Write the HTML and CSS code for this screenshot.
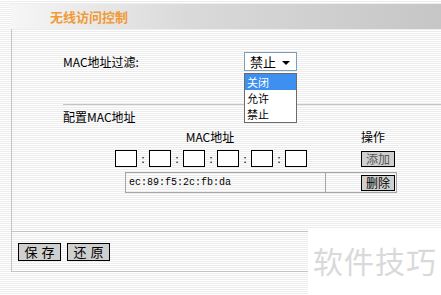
FILE: index.html
```html
<!DOCTYPE html>
<html lang="zh-CN">
<head>
  <meta charset="UTF-8">
  <title>无线访问控制</title>
  <link rel="stylesheet" href="styles.css">
</head>
<body>
  <div class="header">
    <h3>无线访问控制</h3>
  </div>

  <div class="panel">
    <div class="filter-row">
      <span class="filter-label">MAC地址过滤:</span>
      <div class="select-wrap">
        <div class="select-box">
          <span>禁止</span>
          <span class="arrow"></span>
        </div>
        <ul class="select-list">
          <li class="active">关闭</li>
          <li>允许</li>
          <li>禁止</li>
        </ul>
      </div>
    </div>

    <div class="config">
      <div class="config-title">配置MAC地址</div>

      <div class="mac-table">
        <div class="table-head">
          <span class="col-mac">MAC地址</span>
          <span class="col-op">操作</span>
        </div>

        <div class="input-row">
          <div class="mac-inputs">
            <span class="box"></span><span class="sep">:</span>
            <span class="box"></span><span class="sep">:</span>
            <span class="box"></span><span class="sep">:</span>
            <span class="box"></span><span class="sep">:</span>
            <span class="box"></span><span class="sep">:</span>
            <span class="box"></span>
          </div>
          <div class="col-op"><button class="btn small grey-text">添加</button></div>
        </div>

        <div class="entry-row">
          <div class="entry-mac">ec:89:f5:2c:fb:da</div>
          <div class="entry-op"><button class="btn small">删除</button></div>
        </div>
      </div>
    </div>

    <div class="footer">
      <button class="btn wide">保存</button>
      <button class="btn wide">还原</button>
    </div>
  </div>

  <div class="watermark">软件技巧</div>
</body>
</html>
```

FILE: styles.css
```css
body {
  margin: 0;
  padding: 0;
  font-family: "Noto Sans CJK SC", "Liberation Sans", sans-serif;
  font-size: 12px;
  color: #000;
  background: repeating-linear-gradient(to bottom, #ffffff 0, #ffffff 1px, #ececec 1px, #ececec 2px);
  height: 295px;
  overflow: hidden;
  position: relative;
}

.header {
  margin: 4px 0 0 10px;
  height: 25px;
  background: linear-gradient(to right, #f6f6f6, #dadada 40%, #c6c6c6);
}

.header h3 {
  margin: 0;
  padding-left: 40px;
  line-height: 25px;
  font-size: 13px;
  font-weight: bold;
  color: #f19a36;
}

.panel {
  margin-left: 11px;
  border-left: 1px solid #c4c4c4;
  border-bottom: 1px solid #c4c4c4;
}

.filter-row {
  display: flex;
  align-items: center;
  height: 21px;
  padding: 22px 0 0 51px;
  margin-bottom: 32px;
}

.filter-label {
  width: 181px;
  line-height: 16px;
}

.select-wrap {
  position: relative;
}

.select-box {
  width: 53px;
  height: 19px;
  border: 1px solid #7f9db9;
  background: #fff;
  display: flex;
  align-items: center;
  justify-content: space-between;
  padding-left: 5px;
  padding-right: 6px;
  box-sizing: border-box;
  font-size: 13px;
}

.arrow {
  width: 0;
  height: 0;
  border-left: 4px solid transparent;
  border-right: 4px solid transparent;
  border-top: 4px solid #000;
  margin-top: 2px;
}

.select-list {
  position: absolute;
  top: 21px;
  left: 0;
  width: 53px;
  box-sizing: border-box;
  margin: 0;
  padding: 0;
  list-style: none;
  background: #fff;
  border: 1px solid #6b6b6b;
  font-size: 11px;
}

.select-list li {
  height: 16px;
  line-height: 16px;
  padding-left: 2px;
  overflow: hidden;
}

.select-list li.active {
  background: #3d8ff0;
  color: #fff;
}

.config {
  margin-left: 51px;
  border-top: 1px solid #c4c4c4;
}

.config-title {
  padding-top: 4px;
  line-height: 16px;
}

.mac-table {
  margin-left: 52px;
  width: 282px;
}

.table-head {
  display: flex;
  margin-top: 5px;
  line-height: 14px;
}

.col-mac {
  width: 190px;
  text-align: center;
}

.col-op {
  margin-left: auto;
  width: 36px;
}

.input-row {
  display: flex;
  margin-top: 6px;
  height: 17px;
}

.mac-inputs {
  display: flex;
}

.box {
  width: 20px;
  height: 15px;
  border: 1px solid #000;
  background: #fff;
}

.sep {
  width: 12px;
  text-align: center;
  line-height: 17px;
  font-size: 11px;
}

.entry-row {
  display: flex;
  margin: 5px 0 0 10px;
  height: 19px;
  border: 1px solid #a6a6a6;
}

.entry-mac {
  width: 200px;
  border-right: 1px solid #a6a6a6;
  padding-left: 3px;
  font-family: "Liberation Mono", monospace;
  font-size: 10px;
  line-height: 19px;
  box-sizing: border-box;
}

.entry-op {
  flex: 1;
  display: flex;
  align-items: center;
  justify-content: flex-end;
  padding-right: 1px;
}

.btn {
  font-family: "Noto Sans CJK SC", sans-serif;
  background: #cfcfcf;
  border: 1px solid #000;
  padding: 0;
  margin: 0;
  color: #000;
  white-space: nowrap;
}

.btn.small {
  width: 34px;
  height: 16px;
  font-size: 12px;
  line-height: 14px;
}

.grey-text {
  color: #555;
}

.footer {
  margin-top: 38px;
  border-top: 1px solid #c4c4c4;
  padding: 11px 0 10px 6px;
  display: flex;
  gap: 6px;
}

.btn.wide {
  width: 43px;
  height: 18px;
  font-size: 13px;
  line-height: 16px;
  letter-spacing: 4px;
  text-indent: 4px;
}

.watermark {
  position: absolute;
  left: 308px;
  top: 229px;
  width: 133px;
  height: 66px;
  background: #fff;
  color: #d9d9d9;
  font-size: 30px;
  line-height: 30px;
  padding: 16px 0 0 5px;
  box-sizing: border-box;
  letter-spacing: 1px;
}
```
